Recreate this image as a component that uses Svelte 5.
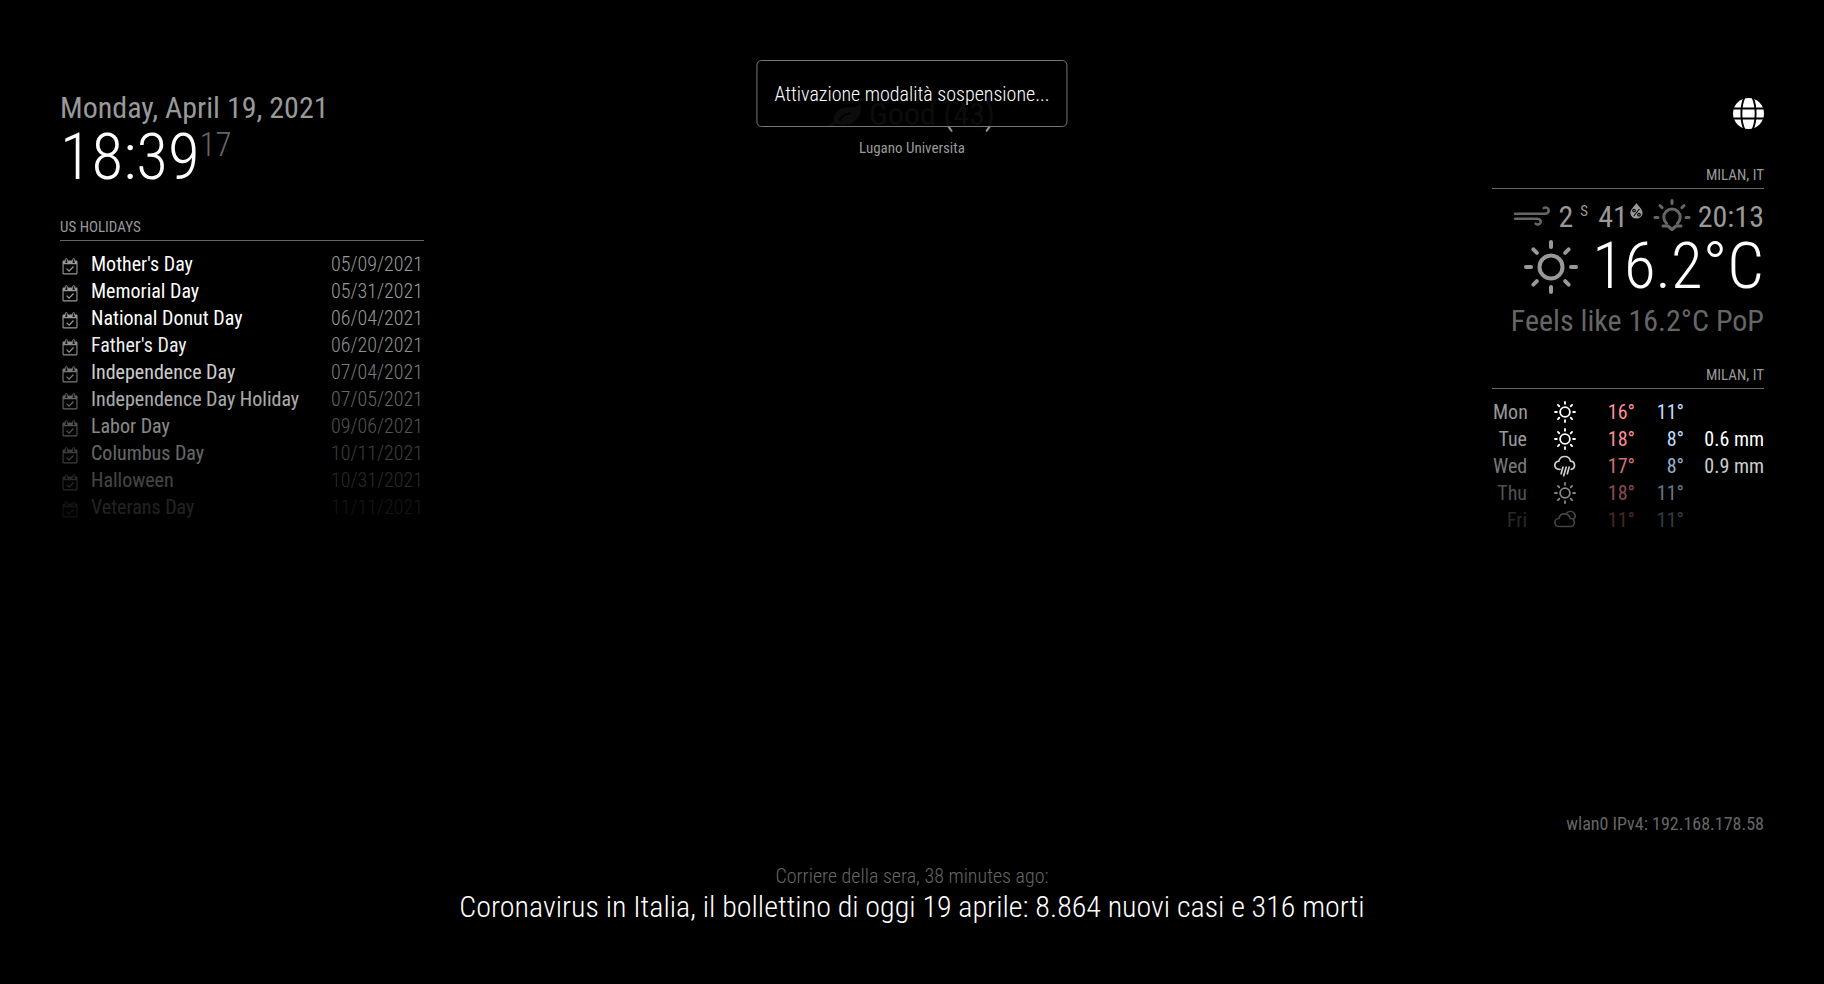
<script>
  const holidays = [
    ["Mother's Day", '05/09/2021'],
    ['Memorial Day', '05/31/2021'],
    ['National Donut Day', '06/04/2021'],
    ["Father's Day", '06/20/2021'],
    ['Independence Day', '07/04/2021'],
    ['Independence Day Holiday', '07/05/2021'],
    ['Labor Day', '09/06/2021'],
    ['Columbus Day', '10/11/2021'],
    ['Halloween', '10/31/2021'],
    ['Veterans Day', '11/11/2021']
  ];

  const forecast = [
    { day: 'Mon', icon: 'sun', max: 16, min: 11, rain: '' },
    { day: 'Tue', icon: 'sun', max: 18, min: 8, rain: '0.6 mm' },
    { day: 'Wed', icon: 'rain', max: 17, min: 8, rain: '0.9 mm' },
    { day: 'Thu', icon: 'sun', max: 18, min: 11, rain: '' },
    { day: 'Fri', icon: 'cloud', max: 11, min: 11, rain: '' }
  ];

  const rays = [0, 45, 90, 135, 180, 225, 270, 315];
  const duskRays = [-90, -45, 0, 45, 90];

  // Rows past the first quarter of a list fade towards black.
  function fade(index, count) {
    const start = count / 4;
    return index < start ? 1 : 1 - (index - start) / (count - start);
  }
</script>

{#snippet sun(thin)}
  <svg class="sun" viewBox="0 0 54 54" aria-hidden="true">
    <g fill="none" stroke="currentColor" stroke-width={thin ? 4.5 : 4} stroke-linecap="round">
      <circle cx="27" cy="27" r={thin ? 12 : 11.5} />
      {#each rays as angle}
        <path d={thin ? 'M27 2.5v4.5' : 'M27 2v5'} transform="rotate({angle} 27 27)" />
      {/each}
    </g>
  </svg>
{/snippet}

<div class="mirror">
  <div class="top">
    <section class="left">
      <div class="date">Monday, April 19, 2021</div>
      <div class="clock">18:39<span class="seconds">17</span></div>

      <header>US Holidays</header>
      <table class="calendar">
        <tbody>
          {#each holidays as [name, date], i}
            <tr style="opacity: {fade(i, holidays.length)}">
              <td class="symbol">
                <svg viewBox="0 0 16 17" width="16" height="17" aria-hidden="true">
                  <path fill="currentColor" fill-rule="evenodd" d="M1.6 2.4H3v1.4a1.3 1.3 0 0 0 2.6 0V2.4h4.8v1.4a1.3 1.3 0 0 0 2.6 0V2.4h1.4q1.1 0 1.1 1.1v11.8q0 1.1-1.1 1.1H1.6q-1.1 0-1.1-1.1V3.5q0-1.1 1.1-1.1zM1.6 6.3v9h12.8v-9z" />
                  <path fill="none" stroke="currentColor" stroke-width="1" d="M3.3 3.8V1.6a1 1 0 0 1 2 0v2.2M10.7 3.8V1.6a1 1 0 0 1 2 0v2.2" />
                  <path fill="none" stroke="currentColor" stroke-width="1.3" d="M4.6 10.6l2.5 2.5 4.4-4.6" />
                </svg>
              </td>
              <td class="name">{name}</td>
              <td class="when">{date}</td>
            </tr>
          {/each}
        </tbody>
      </table>
    </section>

    <section class="center">
      <div class="quality">
        <svg viewBox="0 0 32 24" width="32" height="24" aria-hidden="true">
          <path fill="currentColor" fill-rule="evenodd" d="M30.6.6C29 4 25 4.300 19 4.300 11 4.300 5 9 5 15.500q0 1.300.4 2.400C3.500 19.200.2 20.900.2 22.300q.4 1.500 2 1.500c1.700 0 3-3 4.500-3.900 2 1.800 5 2.300 8 2.300C25 22.200 32 14 31.800 6 31.700 3.500 31.500 1.500 30.600.6zM9.300 17.300c3-5.200 6.700-7.700 12.700-7.900v1.800c-5 .1-8 2.400-11 7z" />
        </svg>
        <span>Good (43)</span>
      </div>
      <div class="station">Lugano Universita</div>
    </section>

    <section class="right">
      <div class="network">
        <svg viewBox="0 0 31 31" width="31" height="31" aria-hidden="true">
          <circle cx="15.500" cy="15.500" r="15.500" fill="currentColor" />
          <g fill="none" stroke="#000" stroke-width="1.900">
            <path d="M0 10.500h31M0 20.500h31" />
            <path d="M11.600-1C7.300 8 7.300 23 11.600 32M19.400-1c4.300 9 4.300 24 0 33" />
          </g>
        </svg>
      </div>

      <header>Milan, IT</header>
      <div class="conditions">
        <svg class="wind" viewBox="0 0 38 20" width="38" height="20" aria-hidden="true">
          <g fill="none" stroke="currentColor" stroke-width="2.500" stroke-linecap="round">
            <path d="M2 7.700h30.500a3.100 3.100 0 1 0-1.700-5.600" />
            <path d="M2 12.700h22.800a2.900 2.900 0 1 1-2.100 4.900" />
          </g>
        </svg>
        <span>2</span>
        <span class="direction">S</span>
        <span>41</span>
        <svg class="humidity" viewBox="0 0 13 16" width="13" height="16" aria-hidden="true">
          <path fill="currentColor" d="M6.500.3C8.500 3 12.600 6.400 12.600 10a6.100 5.600 0 0 1-12.200 0C.4 6.400 4.500 3 6.500.3z" />
          <g fill="none" stroke="#000" stroke-width="1.100">
            <circle cx="4" cy="7.500" r="1.300" />
            <circle cx="9" cy="11.700" r="1.300" />
            <path d="M9.300 6L3.800 13" />
          </g>
        </svg>
        <svg class="sunset" viewBox="0 0 40 34" width="40" height="34" aria-hidden="true">
          <g fill="none" stroke="currentColor" stroke-width="3" stroke-linecap="round" stroke-linejoin="round">
            <path d="M14.500 25.300a8.200 8.200 0 1 1 11 0" />
            {#each duskRays as angle}
              <path d="M20 2.500v3" transform="rotate({angle} 20 19.500)" />
            {/each}
            <path d="M11 28h5l4 3.500 4-3.500h5" />
          </g>
        </svg>
        <span>20:13</span>
      </div>
      <div class="temperature">
        {@render sun(false)}
        <span>16.2°C</span>
      </div>
      <div class="feels">Feels like 16.2°C PoP</div>

      <header>Milan, IT</header>
      <table class="forecast">
        <colgroup>
          <col class="c-day" /><col class="c-icon" /><col class="c-max" /><col class="c-min" /><col />
        </colgroup>
        <tbody>
          {#each forecast as row, i}
            <tr style="opacity: {fade(i, forecast.length)}">
              <td class="day">{row.day}</td>
              <td class="icon">
                {#if row.icon === 'sun'}
                  {@render sun(true)}
                {:else if row.icon === 'rain'}
                  <svg viewBox="0 0 22 22" aria-hidden="true">
                    <g fill="none" stroke="currentColor" stroke-width="1.700" stroke-linecap="round">
                      <path d="M6 14.300H5a4.100 4.100 0 0 1-.2-8.200C5.600 3.200 7.600 1.500 10.600 1.500c3.100 0 5.300 1.900 5.900 4.700a4.100 4.100 0 0 1 .8 8.100" />
                      <path d="M9 12l-1.900 6.800M12.200 12l-2.500 8.700M15.200 12l-1.900 6.800" />
                    </g>
                  </svg>
                {:else}
                  <svg viewBox="0 0 22 22" aria-hidden="true">
                    <g fill="none" stroke="currentColor" stroke-width="1.700" stroke-linecap="round">
                      <path d="M5 17.500a4 4 0 0 1-.2-8C5.600 6.500 7.600 4.900 10.300 4.900c3 0 5.200 1.800 5.900 4.600a4 4 0 0 1 .3 8z" />
                      <path d="M12.500 4.200c2-2.500 5.400-2.500 7.200-.5 1.800 2 1.600 4.700-.1 6.500" />
                    </g>
                  </svg>
                {/if}
              </td>
              <td class="max">{row.max}°</td>
              <td class="min">{row.min}°</td>
              <td class="rain">{row.rain}</td>
            </tr>
          {/each}
        </tbody>
      </table>
    </section>
  </div>

  <footer>
    <div class="address">wlan0 IPv4: 192.168.178.58</div>
    <div class="source">Corriere della sera, 38 minutes ago:</div>
    <div class="headline">Coronavirus in Italia, il bollettino di oggi 19 aprile: 8.864 nuovi casi e 316 morti</div>
  </footer>

  <div class="notification" role="status">Attivazione modalità sospensione...</div>
</div>

<style>
  :global(body) {
    background: #000;
  }

  .mirror {
    position: relative;
    box-sizing: border-box;
    display: flex;
    flex-direction: column;
    justify-content: space-between;
    min-height: 100vh;
    padding: 90px 60px 60px;
    color: #999;
    font-family: 'Roboto Condensed', Roboto, sans-serif;
    font-size: 20px;
    line-height: 25px;
  }

  svg {
    display: block;
    flex: none;
  }

  .top {
    display: grid;
    grid-template-columns: 1fr auto 1fr;
    align-items: start;
  }

  .left {
    justify-self: start;
    min-width: 364px;
  }

  .right {
    justify-self: end;
    width: 272px;
    text-align: right;
  }

  header {
    margin-bottom: 10px;
    padding-bottom: 5px;
    border-bottom: 1px solid #666;
    font-size: 15px;
    line-height: 15px;
    text-transform: uppercase;
  }

  table {
    width: 100%;
    border-collapse: separate;
    border-spacing: 0;
  }

  td {
    padding: 1px;
  }

  .date {
    font-size: 30px;
    line-height: 35px;
  }

  .clock {
    display: flex;
    align-items: flex-start;
    margin-bottom: 30px;
    color: #fff;
    font-size: 65px;
    font-weight: 300;
    line-height: 65px;
  }

  .seconds {
    color: #666;
    font-size: 33px;
    line-height: 39px;
  }

  .symbol {
    width: 27px;
    padding: 7px 1px 3px 2px;
  }

  .name {
    color: #fff;
  }

  .when {
    font-weight: 300;
    text-align: right;
  }

  .center {
    padding-top: 6px;
    text-align: center;
  }

  .quality {
    display: flex;
    align-items: center;
    justify-content: center;
    gap: 8px;
    margin-bottom: 5px;
    font-size: 32px;
    line-height: 37px;
  }

  .station {
    font-size: 15px;
    line-height: 20px;
  }

  .network {
    display: flex;
    justify-content: flex-end;
    padding: 8px 0 39px;
    color: #fff;
  }

  .conditions {
    display: flex;
    align-items: flex-start;
    justify-content: flex-end;
    gap: 7px;
    font-size: 30px;
    line-height: 35px;
  }

  .wind,
  .sunset {
    color: #666;
  }

  .wind {
    margin: 7px 1px 0 0;
  }

  .direction {
    margin-right: 3px;
    font-size: 15px;
    line-height: 25px;
  }

  .humidity {
    margin: 4px 2px 0 -5px;
  }

  .sunset {
    margin: -1px -1px 0 0;
  }

  .temperature {
    display: flex;
    align-items: center;
    justify-content: flex-end;
    gap: 14px;
    margin-bottom: 4px;
    font-size: 65px;
    font-weight: 300;
    line-height: 65px;
  }

  .temperature span {
    color: #fff;
  }

  .temperature .sun {
    width: 54px;
    height: 54px;
  }

  .feels {
    margin-bottom: 30px;
    color: #666;
    font-size: 30px;
    line-height: 35px;
  }

  .forecast {
    table-layout: fixed;
  }

  .c-day {
    width: 36px;
  }

  .c-icon {
    width: 74px;
  }

  .c-max {
    width: 34px;
  }

  .c-min {
    width: 49px;
  }

  .icon {
    color: #fff;
  }

  .icon svg {
    width: 22px;
    height: 22px;
    margin: 0 auto 2px;
  }

  .max {
    color: #ff8e99;
  }

  .min {
    color: #bcddff;
  }

  .rain {
    padding-right: 0;
    color: #fff;
  }

  footer {
    text-align: center;
  }

  .address {
    margin-bottom: 28px;
    color: #666;
    font-size: 18px;
    text-align: right;
  }

  .source {
    color: #666;
    font-weight: 300;
  }

  .headline {
    color: #fff;
    font-size: 30px;
    font-weight: 300;
    line-height: 35px;
  }

  .notification {
    position: absolute;
    top: 60px;
    left: 50%;
    transform: translateX(-50%);
    padding: 21px 17px 19px;
    border: 1px solid #777;
    border-radius: 5px;
    background: rgba(0, 0, 0, 0.92);
    color: #fff;
    font-weight: 300;
    white-space: nowrap;
  }
</style>
